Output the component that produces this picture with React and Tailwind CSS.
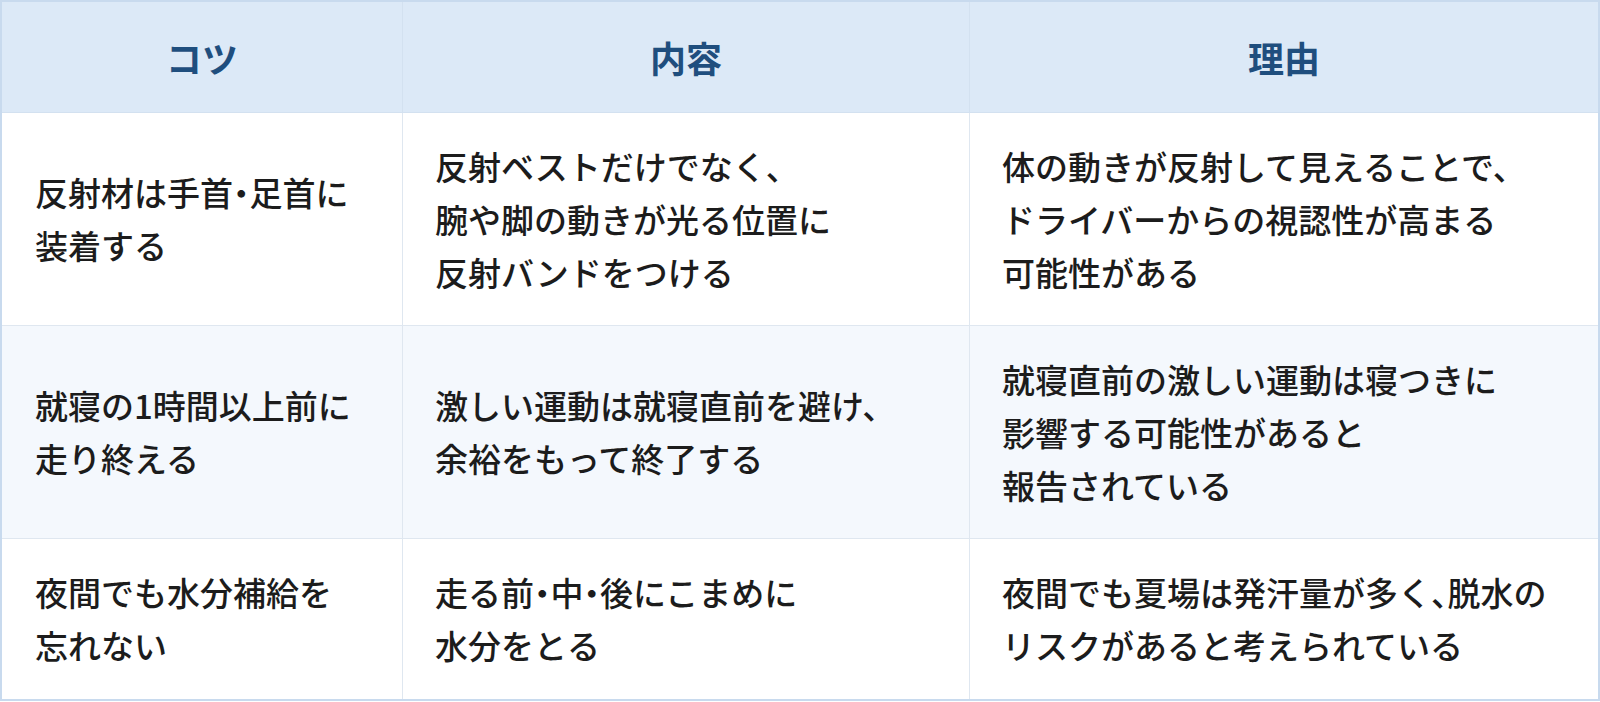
import React from 'react';

const rows = [
  {
    tip: ['反射材は手首・足首に', '装着する'],
    detail: ['反射ベストだけでなく、', '腕や脚の動きが光る位置に', '反射バンドをつける'],
    reason: ['体の動きが反射して見えることで、', 'ドライバーからの視認性が高まる', '可能性がある'],
  },
  {
    tip: ['就寝の1時間以上前に', '走り終える'],
    detail: ['激しい運動は就寝直前を避け、', '余裕をもって終了する'],
    reason: ['就寝直前の激しい運動は寝つきに', '影響する可能性があると', '報告されている'],
  },
  {
    tip: ['夜間でも水分補給を', '忘れない'],
    detail: ['走る前・中・後にこまめに', '水分をとる'],
    reason: ['夜間でも夏場は発汗量が多く、脱水の', 'リスクがあると考えられている'],
  },
];

const Lines = ({ lines }) => (
  <div>
    {lines.map((l) => (
      <div key={l}>{l}</div>
    ))}
  </div>
);

export default function App() {
  return (
    <div
      className="w-[1600px] h-[702px] bg-white"
      style={{ fontFamily: '"Noto Sans CJK JP", "Noto Sans", sans-serif' }}
    >
      <div className="h-[701px] border-2 border-[#c8daee] grid grid-cols-[401px_567px_1fr] grid-rows-[111px_213px_213px_1fr] text-[33px] leading-[53px] font-medium text-[#1c1c1c] [font-feature-settings:'halt']">
        <div className="bg-[#dce9f7] border-b border-r border-[#d3e1f0] flex items-center justify-center text-[36px] font-bold text-[#1f4e7e]">
          コツ
        </div>
        <div className="bg-[#dce9f7] border-b border-r border-[#d3e1f0] flex items-center justify-center text-[36px] font-bold text-[#1f4e7e]">
          内容
        </div>
        <div className="bg-[#dce9f7] border-b border-[#d3e1f0] flex items-center justify-center text-[36px] font-bold text-[#1f4e7e]">
          理由
        </div>
        {rows.map((r, i) => {
          const bg = i === 1 ? 'bg-[#f4f8fd]' : 'bg-white';
          const bottom = i < 2 ? 'border-b' : '';
          return (
            <React.Fragment key={i}>
              <div className={`${bg} ${bottom} border-r border-[#dfe7f0] flex items-center pl-[33px] pr-4`}>
                <Lines lines={r.tip} />
              </div>
              <div className={`${bg} ${bottom} border-r border-[#dfe7f0] flex items-center pl-[32px] pr-4`}>
                <Lines lines={r.detail} />
              </div>
              <div className={`${bg} ${bottom} border-[#dfe7f0] flex items-center pl-[32px] pr-4`}>
                <Lines lines={r.reason} />
              </div>
            </React.Fragment>
          );
        })}
      </div>
    </div>
  );
}
